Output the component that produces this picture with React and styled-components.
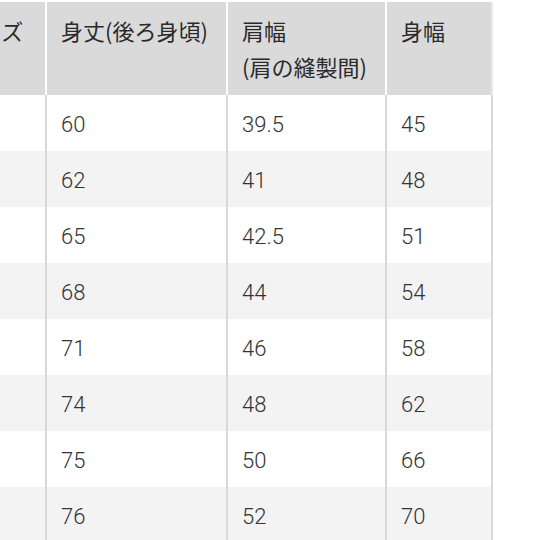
import styled, { createGlobalStyle } from 'styled-components';

const GlobalStyle = createGlobalStyle`
  html, body {
    margin: 0;
    padding: 0;
    background: #fff;
    overflow: hidden;
  }
  body {
    font-family: "Noto Sans CJK JP", "Noto Sans", sans-serif;
  }
`;

const Frame = styled.div`
  width: 540px;
  height: 540px;
  overflow: hidden;
  padding-top: 2px;
  box-sizing: border-box;
`;

// the size column is cut off at the left edge in the source picture
const Table = styled.div`
  margin-left: -56px;
  width: 549px;
`;

const Row = styled.div`
  display: grid;
  grid-template-columns: 101px 181px 159px 108px;
  height: ${(p) => p.$height}px;
  background: ${(p) => (p.$shade ? '#f3f3f3' : '#fff')};
`;

const HeadCell = styled.div`
  box-sizing: border-box;
  background: #dadada;
  border-left: ${(p) => (p.$first ? '0' : '2px solid #fff')};
  border-right: ${(p) => (p.$last ? '2px solid #e8e8e8' : '0')};
  padding: 10px 0 0 14px;
  font-size: 22px;
  line-height: 36px;
  color: #2a2a2a;
  white-space: nowrap;
  overflow: hidden;
`;

const Cell = styled.div`
  box-sizing: border-box;
  border-left: ${(p) => (p.$first ? '0' : '2px solid #d9d9d9')};
  border-right: ${(p) => (p.$last ? '2px solid #d9d9d9' : '0')};
  padding: 2px 0 0 14px;
  display: flex;
  align-items: center;
  font-family: Roboto, "Liberation Sans", sans-serif;
  font-weight: 300;
  font-size: 22px;
  color: #333;
`;

const rows = [
  ['S', '60', '39.5', '45'],
  ['M', '62', '41', '48'],
  ['L', '65', '42.5', '51'],
  ['XL', '68', '44', '54'],
  ['XXL', '71', '46', '58'],
  ['3XL', '74', '48', '62'],
  ['4XL', '75', '50', '66'],
  ['5XL', '76', '52', '70'],
];

function App () {
  return (
    <>
      <GlobalStyle />
      <Frame>
        <Table>
          <Row $height={93}>
            <HeadCell $first>サイズ</HeadCell>
            <HeadCell>身丈(後ろ身頃)</HeadCell>
            <HeadCell>肩幅<br />(肩の縫製間)</HeadCell>
            <HeadCell $last>身幅</HeadCell>
          </Row>
          {rows.map((r, i) => (
            <Row key={i} $height={56} $shade={i % 2 === 1}>
              <Cell $first />
              <Cell>{r[1]}</Cell>
              <Cell>{r[2]}</Cell>
              <Cell $last>{r[3]}</Cell>
            </Row>
          ))}
        </Table>
      </Frame>
    </>
  );
}

export default App;
